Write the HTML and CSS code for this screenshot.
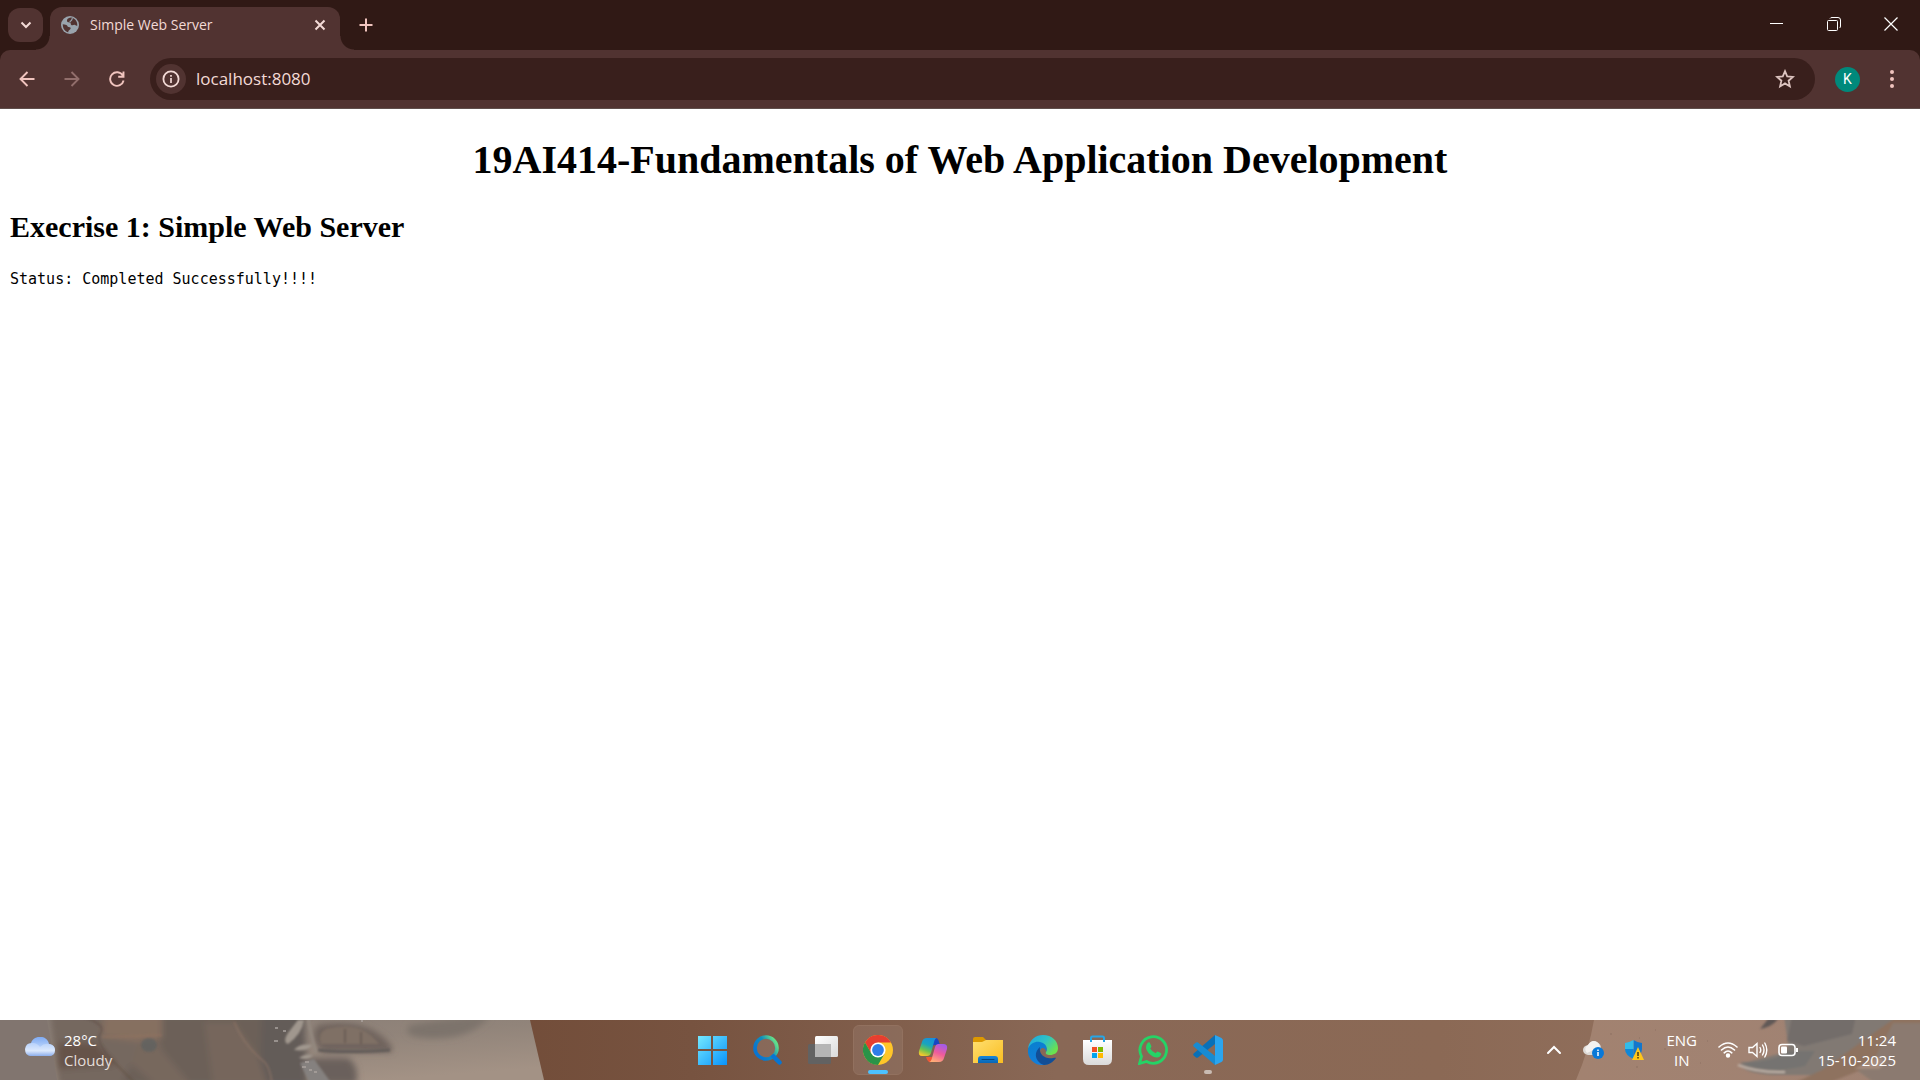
FILE: index.html
```html
<!DOCTYPE html>
<html lang="en">
<head>
<meta charset="utf-8">
<title>Simple Web Server</title>
<link rel="stylesheet" href="styles.css">
</head>
<body>
<div class="desktop">
  <header class="browser">
    <div class="tabstrip">
      <button class="tab-search" aria-label="Search tabs"><svg width="12" height="12" viewBox="0 0 12 12"><path d="M1.500 3.500 6 8l4.500-4.500" fill="none" stroke="#f3dad6" stroke-width="2"/></svg></button>
      <div class="tab">
        <svg class="favicon" width="18" height="18" viewBox="0 0 18 18"><circle cx="9" cy="9" r="9" fill="#9aa4ad"/><path d="M10 1.600C7 2 5.500 3.500 6 5.200c.4 1.300 2.500.9 3.400 1.800.8.800 0 1.700 1.300 2.200 1.300.4 2-.7 3.300-.2 1 .4 1.500 1 2.300.8.400-4-2.300-7.700-6.300-8.200ZM1.800 8c1.200.8 2.400.4 3.600 1 1.200.5.800 1.700 2.200 2 1.200.3 2.100.2 2 1.500-.1 1.500-2.400 1.300-2.300 3.800C4 15.500 1.500 12.500 1.800 8Z" fill="#513331"/><path d="M11.500 2.200c-.8 1-.3 1.800-1.500 2.500-1 .5-1.200 1-.6 1.700" fill="none" stroke="#9aa4ad" stroke-width="1.200"/></svg>
        <span class="tab-title">Simple Web Server</span>
        <button class="tab-close" aria-label="Close tab"><svg width="12" height="12" viewBox="0 0 12 12"><path d="m1.500 1.500 9 9m0-9-9 9" stroke="#f3dad6" stroke-width="2"/></svg></button>
      </div>
      <button class="new-tab" aria-label="New tab"><svg width="14" height="14" viewBox="0 0 14 14"><path d="M7 .5v13M.5 7h13" stroke="#f0c4be" stroke-width="2"/></svg></button>
      <div class="window-controls">
        <button aria-label="Minimize"><svg width="14" height="14" viewBox="0 0 14 14"><path d="M0 6.500h13" stroke="#fff"/></svg></button>
        <button aria-label="Restore"><svg width="14" height="14" viewBox="0 0 14 14" fill="none" stroke="#fff"><rect x=".5" y="3.500" width="10" height="10" rx="1"/><path d="M3 1.500Q3.500.5 5 .5h6Q13.500.5 13.500 3v6q0 1.500-1 2"/></svg></button>
        <button aria-label="Close"><svg width="14" height="14" viewBox="0 0 14 14"><path d="m.5.5 13 13m0-13-13 13" stroke="#fff" stroke-width="1.200"/></svg></button>
      </div>
    </div>
    <div class="toolbar">
      <nav class="nav-buttons" aria-label="History">
        <button aria-label="Back"><svg width="16" height="16" viewBox="0 0 16 16"><path d="M8.500 1 1.500 8l7 7M1.500 8h14" fill="none" stroke="#f0c4be" stroke-width="1.900"/></svg></button>
        <button aria-label="Forward" disabled><svg width="16" height="16" viewBox="0 0 16 16"><path d="m7.500 1 7 7-7 7m7-7H.5" fill="none" stroke="#916e6b" stroke-width="1.900"/></svg></button>
        <button aria-label="Reload"><svg width="16" height="16" viewBox="0 0 16 16"><path d="M13.800 4.500A6.800 6.800 0 1 0 14.600 9.500M14.500.5v5.200H9.200" fill="none" stroke="#f0c4be" stroke-width="1.900"/></svg></button>
      </nav>
      <div class="omnibox">
        <button class="site-info" aria-label="View site information"><svg width="18" height="18" viewBox="0 0 18 18"><circle cx="9" cy="9" r="7.600" fill="none" stroke="#f3dad6" stroke-width="1.800"/><path d="M9 8v5M9 5v1.800" stroke="#f3dad6" stroke-width="1.700"/></svg></button>
        <input class="address" type="text" value="localhost:8080" aria-label="Address" spellcheck="false">
        <button class="bookmark" aria-label="Bookmark this tab"><svg width="20" height="20" viewBox="0 0 20 20"><path d="m10 2.200 2.200 5.200 5.800.5-4.400 3.800 1.300 5.700-4.900-3-4.900 3 1.300-5.700L2 7.900l5.800-.5Z" fill="none" stroke="#dcc3bf" stroke-width="1.800"/></svg></button>
      </div>
      <button class="avatar" aria-label="Profile K">K</button>
      <button class="menu" aria-label="Browser menu"><svg width="6" height="20" viewBox="0 0 6 20" fill="#f0c4be"><circle cx="3" cy="3" r="2"/><circle cx="3" cy="10" r="2"/><circle cx="3" cy="17" r="2"/></svg></button>
    </div>
  </header>

  <main class="page">
    <h1>19AI414-Fundamentals of Web Application Development</h1>
    <h2>Execrise 1: Simple Web Server</h2>
    <pre>Status: Completed Successfully!!!!</pre>
  </main>

  <footer class="taskbar">
    <svg class="wallpaper" viewBox="0 0 1920 60" preserveAspectRatio="none" aria-hidden="true">
      <defs>
        <linearGradient id="wood"><stop offset="0" stop-color="#6f4a36"/><stop offset=".22" stop-color="#704a36"/><stop offset=".36" stop-color="#775340"/><stop offset=".55" stop-color="#896856"/><stop offset=".75" stop-color="#8b6955"/><stop offset="1" stop-color="#967665"/></linearGradient>
        <linearGradient id="sand" x2=".7" y2="1"><stop offset="0" stop-color="#887d76"/><stop offset=".5" stop-color="#91847a"/><stop offset="1" stop-color="#a39285"/></linearGradient>
        <linearGradient id="ground"><stop offset="0" stop-color="#a28270"/><stop offset="1" stop-color="#a08374"/></linearGradient>
        <filter id="soft" x="-10%" y="-20%" width="120%" height="140%"><feGaussianBlur stdDeviation="3"/></filter>
        <filter id="fine" x="-10%" y="-20%" width="120%" height="140%"><feGaussianBlur stdDeviation="1"/></filter>
      </defs>
      <rect width="1920" height="60" fill="url(#wood)"/>
      <path d="M0 0h530l14 60H0Z" fill="url(#sand)"/>
      <g filter="url(#soft)">
        <path d="M50-6h115v72H58Z" fill="#75675f"/>
        <path d="M58 23h38l20 22-58 4Z" fill="#66534a"/>
        <path d="M104-6h58v31l-60-8Z" fill="#866f60"/>
        <path d="M162-6h128l18 72H120l20-40 22-8Z" fill="#6c6059"/>
        <path d="M138 22q22-8 24 8l30 36h-35l-26-22Z" fill="#77675d"/>
        <path d="M204 2h31l24 36 14 6v22h-60Z" fill="#76665c"/>
        <path d="M262-6h42l4 72h-40l-8-26Z" fill="#645c58"/>
        <path d="M318 5q52-9 74 22v5h-70q-14-16-4-27Z" fill="#70645d"/>
        <path d="M305 38h43q12 8 8 26h-35Z" fill="#6a615c"/>
        <path d="M410 5q50-9 80-9-20 25-65 22-25-2-15-13Z" fill="#7d736c"/>
      </g>
      <path d="M0 0h47q6 30 10 60H0Z" fill="#81756f"/>
      <g filter="url(#fine)">
        <path d="M80-4q28 8 20 18-4 8 10 24l26 26" fill="none" stroke="#5d4c44" stroke-width="2" opacity=".5"/>
        <path d="M102 17q30 0 60-2" fill="none" stroke="#95745f" stroke-width="2" opacity=".5"/>
        <path d="M234 2q10 23 28 38 8 5 10 24" fill="none" stroke="#947768" stroke-width="2" opacity=".5"/>
        <ellipse cx="149" cy="25" rx="8" ry="7" fill="#5d605f" opacity=".7"/>
        <path d="M326 9q35-10 53 15h-58q-4-10 5-15Z" fill="#7f7065"/>
        <path d="M345 9v14m16-11v12" stroke="#6a5d55" stroke-width="2"/>
        <path d="M318 30q25 3 72 0" fill="none" stroke="#625c59" stroke-width="3"/>
        <g fill="#a0978e"><path d="M304 0q-2 14-16 24-6-2 0-11l10-13Z"/><path d="M294 30q6-7 18-5-3 7-18 5Zm5 8q6-5 14-3-4 6-14 3Z"/></g>
        <path d="M308-3q3 20 8 35" fill="none" stroke="#93887f" stroke-width="3"/>
        <path d="m300 43 14-4 18 25h-22Z" fill="#85817f"/>
      </g>
      <path d="M275 8h3m5 3h3m-12 10h4m24 26h4m-1-5h4m5 10h3m-8-2h3m49-49h2" stroke="#aaa39e" stroke-width="1.500"/>
      <path d="M1594 0h326v60h-344q13-30 18-60Z" fill="url(#ground)"/>
      <path d="M1610 14h2m27 4h1m24 11h2m-11-19h1m31 35h1m-52 2h2m69-26h1m-8 22h1" stroke="#8d7162" stroke-width="1"/>
      <g filter="url(#fine)">
        <path d="m1784-4 4 28q0 8-10 10l-38 10q2 9 33 11h57l24-14 50-45Z" fill="#817973"/>
        <path d="M1792-4h64l-4 18-48 12-17-5Z" fill="#736d6a"/>
        <path d="M1740 42q30 2 48-11h27l-10 15q-40 9-65-4Z" fill="#757371"/>
        <path d="m1898-4-20 14-56 40-30 14h34l50-20 50-44Z" fill="#8e725f"/>
        <path d="M1893 3h33v61h-50l-18-13 18-15Z" fill="#8b7a70"/>
        <path d="m1854 49 25-12q10 5 0 12Z" fill="#a58b7b"/>
        <path d="m1760 9 8-10h10q-6 8-18 10Z" fill="#615956"/>
        <path d="M1738 45q20 8 47 7" fill="none" stroke="#c0b2a8" stroke-width="2"/>
      </g>
    </svg>

    <button class="weather">
      <svg width="30" height="26" viewBox="0 0 30 26"><defs><linearGradient id="cl" x2="0" y2="1"><stop offset="0" stop-color="#7eaaf3"/><stop offset=".6" stop-color="#bdd6fb"/><stop offset="1" stop-color="#8eafee"/></linearGradient><linearGradient id="cf" x2="0" y2="1"><stop offset="0" stop-color="#b7d1fa"/><stop offset=".6" stop-color="#dce9fd"/><stop offset="1" stop-color="#8caeec"/></linearGradient></defs><path d="M6 10C4-2 22-4 24 7c8 1 7 11 0 12H7c-6 0-6-7-1-9Z" fill="url(#cl)"/><path d="M0 12q1-7 8-6 4 0 7 4 4-4 9-3 6 1 6 6 0 6-6 6H6q-6 0-6-7Z" fill="url(#cf)"/></svg>
      <span class="lines"><span>28°C</span><span class="muted">Cloudy</span></span>
    </button>

    <nav class="apps" aria-label="Taskbar apps">
      <button aria-label="Start"><svg width="30" height="30" viewBox="2 0 30 30"><defs><linearGradient id="win" gradientUnits="userSpaceOnUse" x1="0" y1="0" x2="30" y2="30"><stop stop-color="#7aedff"/><stop offset="1" stop-color="#0a94fb"/></linearGradient></defs><path d="M2 1h13v13H2Zm15 0h14v13H17ZM2 16h13v14H2Zm15 0h14v14H17Z" fill="url(#win)"/></svg></button>
      <button aria-label="Search"><svg width="30" height="30" viewBox="1 0 30 30"><defs><linearGradient id="sea" x1=".1" y1=".7" x2=".9" y2=".2"><stop stop-color="#0875d2"/><stop offset=".55" stop-color="#108dbb"/><stop offset="1" stop-color="#61de8a"/></linearGradient></defs><circle cx="14" cy="13" r="11" fill="#9a8174" fill-opacity=".45" stroke="url(#sea)" stroke-width="3.600"/><path d="m21.500 21.500 6 6" stroke="#0875d2" stroke-width="4.500" stroke-linecap="round"/></svg></button>
      <button aria-label="Task view"><svg width="30" height="30" viewBox="0 0 30 30"><defs><linearGradient id="tv" x2="1" y2="1"><stop stop-color="#fff"/><stop offset="1" stop-color="#dadada"/></linearGradient></defs><rect y="9" width="23" height="20" rx="1.500" fill="#626262"/><rect x="7" y="1" width="23" height="21" rx="1.500" fill="url(#tv)"/><path d="M7 9h16v13H8q-1 0-1-1Z" fill="#b5b5b5"/></svg></button>
      <button class="active" aria-label="Google Chrome"><svg width="30" height="30" viewBox="0 0 30 30"><circle cx="15" cy="15" r="15" fill="#ffc629"/><path d="M2 7.500A15 15 0 0 1 28 7.500H15L8.500 18.700Z" fill="#e63e30"/><path d="M2 7.500A15 15 0 0 0 15 30l6.500-11.200L15 15l-6.500 3.700Z" fill="#2a9348"/><circle cx="15" cy="15" r="7.600" fill="#fff"/><circle cx="15" cy="15" r="5.900" fill="#2f7de9"/></svg></button>
      <button aria-label="Copilot"><svg width="30" height="30" viewBox="0 0 30 30"><defs><linearGradient id="cpa" x1=".7" x2=".3" y2="1"><stop stop-color="#188fdc"/><stop offset=".4" stop-color="#18a5bd"/><stop offset=".7" stop-color="#68c251"/><stop offset="1" stop-color="#f5c72c"/></linearGradient><linearGradient id="cpb" x1=".7" x2=".3" y2="1"><stop stop-color="#a25bea"/><stop offset=".5" stop-color="#ef5b9c"/><stop offset="1" stop-color="#ffae76"/></linearGradient></defs><path d="M14 3h4q2 0 3 4l1 3h-5q-3 0-4 4Z" fill="#1847c3"/><path d="M8 22h6l3-2-2 5q-1 3-4 2-2-1-3-5Z" fill="#ef5635"/><path d="M9 3h10q-2 0-3 4l-3 11q-1 3-4 3H4q-4 0-3-5L4 7q1-4 5-4Z" fill="url(#cpa)"/><path d="M20 9h5q5 0 4 5l-3 9q-1 4-5 4H11q2 0 3-4l3-11q1-3 3-3Z" fill="url(#cpb)"/></svg></button>
      <button aria-label="File Explorer"><svg width="30" height="30" viewBox="0 0 30 30"><defs><linearGradient id="fo" x2="1" y2="1"><stop stop-color="#ffdf70"/><stop offset="1" stop-color="#f9bd21"/></linearGradient><linearGradient id="fb" x2="0" y2="1"><stop stop-color="#1786d8"/><stop offset="1" stop-color="#0866b5"/></linearGradient></defs><path d="M0 4q0-2 2-2h8l3 3v4H0Z" fill="#dd9900"/><path d="M0 7h9l4-2h17v23H0Z" fill="url(#fo)"/><path d="M5 28v-4q0-3 3-3h14q3 0 3 3v4Z" fill="url(#fb)"/><path d="M9 24.500h12" stroke="#07467e" stroke-linecap="round"/></svg></button>
      <button aria-label="Microsoft Edge"><svg width="30" height="30" viewBox="0 0 30 30"><defs><linearGradient id="ea" x2="1" y2=".6"><stop stop-color="#1ca5e4"/><stop offset=".55" stop-color="#2fc3c5"/><stop offset="1" stop-color="#6be24e"/></linearGradient><linearGradient id="eb" x2=".5" y2="1"><stop stop-color="#087fce"/><stop offset="1" stop-color="#157edb"/></linearGradient></defs><path d="M0 13C2 4 8 0 15 0c9 0 15 6 15 13 0 5-4 7-8 7-3 0-5-1-4-3 4-6-7-11-18-4Z" fill="url(#ea)"/><path d="M0 14C2 8 8 6 12 7c6 1 8 6 6 10 0-4-5-6-6-1-1 6 8 13 15 7-3 5-8 7-13 7C6 30-1 23 0 14Z" fill="url(#eb)"/><path d="M12 12c-8 7-3 16 4 18 5 0 9-3 12-7-1-1-4 1-8 0-6-1-9-6-8-11Z" fill="#124e96"/></svg></button>
      <button aria-label="Microsoft Store"><svg width="30" height="30" viewBox="1 0 30 30"><defs><linearGradient id="st" x2="0" y2="1"><stop stop-color="#fff"/><stop offset="1" stop-color="#dadada"/></linearGradient></defs><path d="M1 5h29v19q0 6-6 6H7q-6 0-6-6Z" fill="url(#st)"/><path d="M9 7V3q0-1.500 1.500-1.500h10Q22 1.500 22 3v4" fill="none" stroke="#27a6e5" stroke-width="2"/><path d="M10 12h5v5h-5Z" fill="#f25022"/><path d="M16 12h5v5h-5Z" fill="#7fba00"/><path d="M10 18h5v5h-5Z" fill="#00a4ef"/><path d="M16 18h5v5h-5Z" fill="#ffb900"/></svg></button>
      <button aria-label="WhatsApp"><svg width="30" height="30" viewBox="0 0 30 30"><path d="m1.500 28.500 2-7.200a13.300 13.300 0 1 1 5 5.200Z" fill="none" stroke="#25d366" stroke-width="2.800"/><path d="M9.500 8q1-1 2.200-.5l1.700 3.700q.2.700-1.200 2.200 2 3.500 5.500 4.800 1.400-1.900 2-1.700l3.500 1.800q.3 3.500-3.900 4.200-4 .3-8.800-4.600Q6 12.500 9.500 8Z" fill="#25d366"/></svg></button>
      <button class="running" aria-label="Visual Studio Code"><svg width="30" height="30" viewBox="0 0 30 30"><path d="M22 0v9L5 22.500q-1 .7-2 0l-2.300-2q-1-1 0-2Z" fill="#0870b8"/><path d="M22 30v-9L5 7.500q-1-.7-2 0l-2.300 2q-1 1 0 2Z" fill="#188bd2"/><path d="m22 0 6.500 3Q30 4 30 5.500v19q0 1.500-1.500 2.500L22 30Z" fill="#2aa5ef"/></svg></button>
    </nav>

    <div class="tray">
      <button class="tray-icon" aria-label="Show hidden icons"><svg width="16" height="16" viewBox="0 0 16 16"><path d="m2 11 6-6 6 6" fill="none" stroke="#fff" stroke-width="2" stroke-linecap="round"/></svg></button>
      <button class="tray-icon" aria-label="OneDrive"><svg width="22" height="20" viewBox="0 0 22 20"><path d="M5 5Q9-1 14 2q4 2 4 6v7H5q-5-1-5-5 0-4 5-5Z" fill="#dcd9d6"/><path d="M5 5Q9-1 14 2q3 2 3 5L4 13Q0 8 5 5Z" fill="#f4f2f0"/><circle cx="15" cy="13" r="6" fill="#0878d8"/><path d="M15 12v4m0-6.500V11" stroke="#fff" stroke-width="1.500"/></svg></button>
      <button class="tray-icon" aria-label="Windows Security"><svg width="20" height="20" viewBox="0 0 20 20"><path d="M9.500 0Q13 2.500 18 3v6q0 6-8.500 10Z" fill="#1277cd"/><path d="M9.500 0Q5 2.500 1 3v6h8.500Z" fill="#31bcea"/><path d="M1 9h8.500v10Q1 15 1 9Z" fill="#0f87d8"/><path d="m14 7 6 13H8Z" fill="#ffc61a"/><path d="M14 12v4m0 1v1.500" stroke="#2b2515" stroke-width="1.300"/></svg></button>
      <button class="language" aria-label="Language ENG IN"><span>ENG</span><span>IN</span></button>
      <button class="status" aria-label="Network, volume and battery">
        <svg width="20" height="20" viewBox="0 0 20 20" fill="none" stroke="#fff" stroke-width="1.600" stroke-linecap="round"><path d="M1 7q9-8 18 0M3.500 10q6.500-6 13 0M6.200 12.800q3.800-3.600 7.600 0"/><circle cx="10" cy="15.500" r="1.400" fill="#fff"/></svg>
        <svg width="20" height="20" viewBox="0 0 20 20" fill="none" stroke="#fff" stroke-width="1.400" stroke-linecap="round"><path d="M1 7.500h3.500L9 3.500v13l-4.500-4H1ZM12 7.500q1.500 2.500 0 5M14.500 5q3 5 0 10M16.800 3q4 7 0 14"/></svg>
        <svg width="20" height="20" viewBox="0 0 20 20"><rect x="1" y="4.500" width="16" height="11" rx="3" fill="none" stroke="#fff" stroke-width="1.600"/><rect x="3" y="6.500" width="6" height="7" rx="1" fill="#fff"/><path d="M18 8h2v4h-2Z" fill="#fff"/></svg>
      </button>
      <button class="clock" aria-label="11:24, 15-10-2025"><span>11:24</span><span>15-10-2025</span></button>
    </div>
  </footer>
</div>
</body>
</html>
```
FILE: styles.css
```css
* { box-sizing: border-box; }

body {
  margin: 0;
  background: #fff;
  font-family: "Open Sans", "Noto Sans", sans-serif;
}

button {
  display: flex;
  align-items: center;
  justify-content: center;
  padding: 0;
  border: 0;
  background: none;
  color: inherit;
  font: inherit;
}

svg { display: block; flex: none; }

.desktop {
  display: flex;
  flex-direction: column;
  min-height: 100vh;
}

/* Browser frame */
.browser { background: #301915; }

.tabstrip {
  display: flex;
  height: 50px;
  padding-left: 8px;
}

.tab-search {
  width: 35px;
  height: 34px;
  margin: 8px 7px 0 0;
  border-radius: 12px;
  background: #513331;
}

.tab {
  position: relative;
  display: flex;
  align-items: center;
  width: 290px;
  margin-top: 7px;
  padding: 0 12px 7px 11px;
  border-radius: 12px 12px 0 0;
  background: #513331;
}

.tab::before,
.tab::after {
  content: "";
  position: absolute;
  bottom: 0;
  width: 14px;
  height: 14px;
}

.tab::before {
  right: 100%;
  background: radial-gradient(circle at 0 0, transparent 13px, #513331 14px);
}

.tab::after {
  left: 100%;
  background: radial-gradient(circle at 100% 0, transparent 13px, #513331 14px);
}

.tab-title {
  flex: 1;
  margin-left: 11px;
  color: #f3dad6;
  font-size: 14px;
  line-height: 20px;
}

.tab-close { width: 16px; height: 20px; }

.new-tab {
  width: 30px;
  height: 34px;
  margin: 8px 0 0 11px;
}

.window-controls { display: flex; margin-left: auto; padding-right: 1px; }
.window-controls button { width: 57px; height: 48px; }

.toolbar {
  display: flex;
  align-items: center;
  height: 59px;
  border-bottom: 1px solid #5f4e4b;
  border-radius: 10px 10px 0 0;
  padding: 0 10px;
  background: #513331;
}

.nav-buttons { display: flex; gap: 11px; }
.nav-buttons button { width: 34px; height: 34px; }

.omnibox {
  display: flex;
  flex: 1;
  align-items: center;
  height: 42px;
  margin: 0 20px 0 16px;
  padding: 0 20px 0 6px;
  border-radius: 21px;
  background: #391f1c;
}

.site-info {
  width: 30px;
  height: 30px;
  border-radius: 50%;
  background: #513331;
}

.address {
  flex: 1;
  min-width: 0;
  padding: 0 0 0 10px;
  border: 0;
  outline: 0;
  background: none;
  color: #f3dad6;
  font: 17px/24px "Open Sans", "Noto Sans", sans-serif;
}

.avatar {
  width: 25px;
  height: 25px;
  border-radius: 50%;
  background: #00897b;
  color: #fff;
  font: 14px/20px Roboto, sans-serif;
}

.menu { width: 30px; height: 34px; margin: 0 3px 0 17px; }

/* Served page */
.page {
  flex: 1;
  padding: 0 10px;
  color: #000;
  font-family: "Liberation Serif", serif;
}

.page h1 {
  margin: 28px 0 27px;
  font-size: 40px;
  line-height: 46px;
  text-align: center;
}

.page h2 {
  margin: 25px 0;
  font-size: 30px;
  line-height: 34px;
}

.page pre {
  margin: 0;
  font: 15px/20px "DejaVu Sans Mono", monospace;
}

/* Taskbar */
.taskbar {
  position: relative;
  display: grid;
  grid-template-columns: 1fr auto 1fr;
  align-items: center;
  height: 60px;
  color: #fff;
  font-size: 15px;
  line-height: 20px;
}

.wallpaper {
  position: absolute;
  inset: 0;
  z-index: -1;
  width: 100%;
  height: 100%;
}

.weather {
  justify-self: start;
  gap: 9px;
  padding-left: 25px;
  text-align: left;
}

.lines,
.language,
.clock {
  display: flex;
  flex-direction: column;
}

.muted { color: #e4deda; }

.apps { display: flex; gap: 5px; }

.apps button {
  position: relative;
  width: 50px;
  height: 50px;
  border-radius: 6px;
}

.apps .active {
  border: 1px solid #92715f;
  background: rgba(255, 255, 255, 0.08);
}

.apps .active::after,
.apps .running::after {
  content: "";
  position: absolute;
  bottom: 0;
  width: 20px;
  height: 4px;
  border-radius: 2px;
  background: #4cc2ff;
}

.apps .running::after {
  bottom: 1px;
  width: 8px;
  background: #c9bbb2;
}

.tray {
  display: flex;
  align-items: center;
  justify-self: end;
  padding-right: 24px;
}

.tray-icon { width: 40px; height: 40px; }

.language { width: 56px; }

.status { gap: 10px; padding: 0 20px 0 8px; }

.clock { align-items: flex-end; }
```
